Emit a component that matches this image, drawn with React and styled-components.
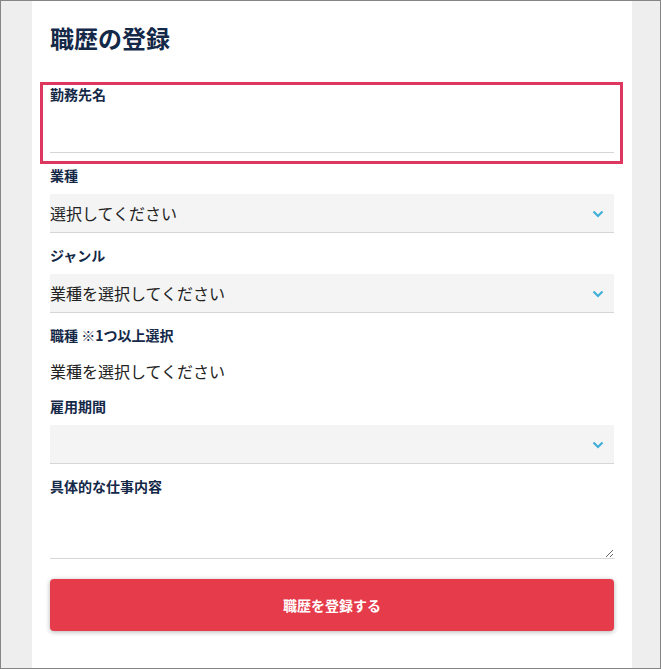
import React from "react";
import styled, { createGlobalStyle } from "styled-components";

const Colours = {
    NAVY: "#142848",
    TEXT: "#222222",
    LINE: "#d6d6d6",
    FIELD_BG: "#f4f4f4",
    PAGE_BG: "#eeeeee",
    FRAME: "#858585",
    ALERT: "#dd3760",
    BUTTON: "#e63b4a",
    CHEVRON: "#42afd9",
};

const GlobalStyle = createGlobalStyle`
    html, body {
        margin: 0;
        padding: 0;
        background: #ffffff;
    }
    body {
        font-family: "Noto Sans CJK JP", "Noto Sans", sans-serif;
    }
    * {
        box-sizing: border-box;
    }
`;

function Chevron() {
    return (
        <ChevronIcon width="12" height="8" viewBox="0 0 12 8" aria-hidden="true">
            <polyline
                points="1.5,1.5 6,6 10.5,1.5"
                fill="none"
                stroke={Colours.CHEVRON}
                strokeWidth="2.2"
            />
        </ChevronIcon>
    );
}

function SelectField({ label, placeholder }) {
    return (
        <Field>
            <Label>{label}</Label>
            <SelectWrap>
                <Select defaultValue="">
                    <option value="">{placeholder}</option>
                </Select>
                <Chevron />
            </SelectWrap>
        </Field>
    );
}

export default function App() {
    return (
        <>
            <GlobalStyle />
            <Frame>
                <Panel>
                    <Title>職歴の登録</Title>
                    <Form>
                        <Highlight>
                            <Field>
                                <Label>勤務先名</Label>
                                <TextInput type="text" />
                            </Field>
                        </Highlight>
                        <SelectField label="業種" placeholder="選択してください" />
                        <SelectField label="ジャンル" placeholder="業種を選択してください" />
                        <Field>
                            <Label>職種 ※1つ以上選択</Label>
                            <Note>業種を選択してください</Note>
                        </Field>
                        <SelectField label="雇用期間" placeholder="" />
                        <Field>
                            <Label>具体的な仕事内容</Label>
                            <TextArea />
                        </Field>
                        <SubmitButton type="button">職歴を登録する</SubmitButton>
                    </Form>
                </Panel>
            </Frame>
        </>
    );
}

const Frame = styled.div`
    display: flex;
    width: 661px;
    height: 669px;
    border: 1px solid ${Colours.FRAME};
    background: ${Colours.PAGE_BG};
    padding-left: 31px;
    overflow: hidden;
`;

const Panel = styled.div`
    width: 600px;
    height: 100%;
    background: #ffffff;
    padding: 20px 18px 0 18px;
    display: flex;
    flex-direction: column;
`;

const Title = styled.h1`
    margin: 0 0 27px 0;
    font-size: 24px;
    line-height: 34px;
    font-weight: 700;
    color: ${Colours.NAVY};
`;

const Form = styled.form`
    display: flex;
    flex-direction: column;
    gap: 15px;
`;

const Highlight = styled.div`
    border: 3px solid ${Colours.ALERT};
    padding: 2px 6px 8px 7px;
    margin: 0 -9px -11px -10px;
`;

const Field = styled.div`
    display: flex;
    flex-direction: column;
`;

const Label = styled.label`
    font-size: 14px;
    line-height: 14px;
    font-weight: 700;
    color: ${Colours.NAVY};
    margin-bottom: 12px;
`;

const TextInput = styled.input`
    height: 40px;
    border: none;
    border-bottom: 1px solid ${Colours.LINE};
    background: transparent;
    font-size: 16px;
    font-family: inherit;
    outline: none;
    padding: 0;
`;

const SelectWrap = styled.div`
    position: relative;
    height: 39px;
`;

const Select = styled.select`
    appearance: none;
    -webkit-appearance: none;
    width: 100%;
    height: 100%;
    border: none;
    border-bottom: 1px solid ${Colours.LINE};
    border-radius: 0;
    background: ${Colours.FIELD_BG};
    color: ${Colours.TEXT};
    font-size: 16px;
    font-family: inherit;
    padding: 0;
    outline: none;
`;

const ChevronIcon = styled.svg`
    position: absolute;
    right: 10px;
    top: 50%;
    margin-top: -4px;
    pointer-events: none;
`;

const Note = styled.p`
    margin: 0;
    height: 30px;
    padding-top: 6px;
    font-size: 16px;
    line-height: 22px;
    color: ${Colours.TEXT};
`;

const TextArea = styled.textarea`
    height: 54px;
    border: none;
    border-bottom: 1px solid ${Colours.LINE};
    resize: vertical;
    font-size: 16px;
    font-family: inherit;
    outline: none;
    padding: 0;
`;

const SubmitButton = styled.button`
    margin-top: 5px;
    height: 52px;
    border: none;
    border-radius: 4px;
    background: ${Colours.BUTTON};
    box-shadow: 0 1px 5px rgba(0, 0, 0, 0.3);
    color: #ffffff;
    font-size: 14px;
    font-weight: 700;
    font-family: inherit;
    cursor: pointer;
`;
